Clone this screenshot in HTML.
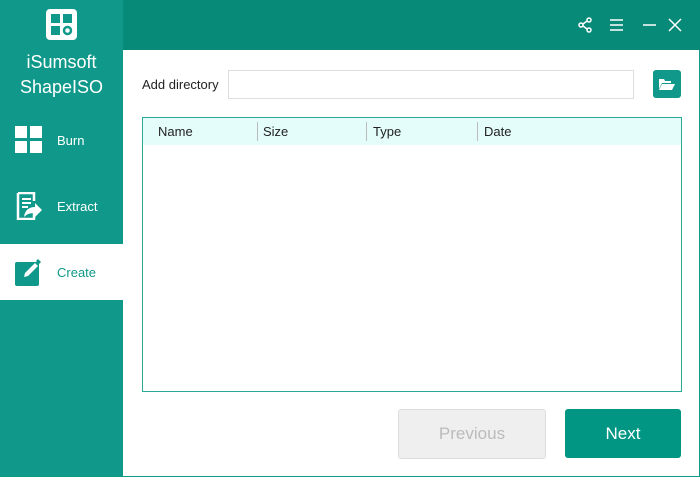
<!DOCTYPE html><html><head><style>
body{margin:0;width:700px;height:477px;position:relative;font-family:"Segoe UI","Liberation Sans",sans-serif;background:#fff;overflow:hidden}
.a{position:absolute}
#side{left:0;top:0;width:123px;height:477px;background:#10998a}
#top{left:123px;top:0;width:577px;height:50px;background:#078a77}
.nav{left:0;width:123px;height:56px;color:#fff;font-size:13px}
.nav span{position:absolute;left:57px;top:21px}
</style></head><body>
<div id="side" class="a"></div>
<div id="top" class="a"></div>
<div class="a" style="right:0;top:50px;width:1px;height:427px;background:#10998a"></div>
<div class="a" style="left:123px;bottom:0;width:577px;height:1px;background:#10998a"></div>
<svg class="a" style="left:46px;top:9px" width="31" height="31"><rect width="31" height="31" rx="4" fill="#fff"/><rect x="5" y="5" width="9" height="9" fill="#10998a"/><rect x="17" y="5" width="9" height="9" fill="#10998a"/><rect x="5" y="17" width="9" height="9" fill="#10998a"/><circle cx="21.5" cy="21.5" r="3.5" fill="none" stroke="#10998a" stroke-width="2.5"/></svg>
<div class="a" style="left:0;top:50px;width:123px;text-align:center;color:#fff;font-size:18px;line-height:25px">iSumsoft<br>ShapeISO</div>
<div class="a nav" style="top:112px"><svg class="a" style="left:15px;top:14px" width="27" height="28"><rect width="12" height="12" fill="#fff"/><rect x="15" width="12" height="12" fill="#fff"/><rect y="15" width="12" height="12" fill="#fff"/><rect x="15" y="15" width="12" height="12" fill="#fff"/></svg><span>Burn</span></div>
<div class="a nav" style="top:178px"><svg class="a" style="left:16px;top:14px" width="26" height="28"><path d="M2 1h16v8M2 1v26h16v-6" fill="none" stroke="#fff" stroke-width="2.5"/><path d="M6 7h9M6 11h9M6 15h6" stroke="#fff" stroke-width="2"/><path d="M8 25c1-7 5-10 11-10v-4l7 7-7 7v-4c-5 0-8 1-11 4z" fill="#fff"/></svg><span>Extract</span></div>
<div class="a nav" style="top:244px;background:#fff;color:#10998a"><svg class="a" style="left:15px;top:14px" width="28" height="30"><rect x="0" y="4" width="24" height="24" rx="2" fill="#10998a"/><path d="M9 19l1-4 10-10 3 3-10 10z" fill="#fff"/><path d="M21 3l2-2 3 3-2 2z" fill="#10998a"/></svg><span>Create</span></div>
<svg class="a" style="left:578px;top:17px" width="110" height="17" fill="none" stroke="#fff" stroke-width="1.5"><circle cx="11" cy="3" r="2"/><circle cx="3" cy="8" r="2"/><circle cx="11" cy="13" r="2"/><path d="M5 7l4-3M5 9l4 3"/><path d="M32 3h13M32 8h13M32 13h13M65 8h13M91 2l12 12M103 2l-12 12"/></svg>
<div class="a" style="left:142px;top:77px;font-size:13px;color:#222">Add directory</div>
<div class="a" style="left:228px;top:70px;width:404px;height:27px;border:1px solid #ddd"></div>
<div class="a" style="left:653px;top:70px;width:28px;height:28px;border-radius:3px;background:#10998a"><svg class="a" style="left:6px;top:8px" width="16" height="12"><path d="M0 1h5l1 2h6v2H3L0 11z" fill="#fff"/><path d="M3 6h13l-3 6H0z" fill="#fff"/></svg></div>
<div class="a" style="left:142px;top:117px;width:538px;height:273px;border:1px solid #2aa898"></div>
<div class="a" style="left:143px;top:118px;width:538px;height:27px;background:#e4fdfa;font-size:13px;color:#222">
<span class="a" style="left:15px;top:6px">Name</span><span class="a" style="left:114px;top:4px;width:1px;height:19px;background:#bbb"></span>
<span class="a" style="left:120px;top:6px">Size</span><span class="a" style="left:223px;top:4px;width:1px;height:19px;background:#bbb"></span>
<span class="a" style="left:230px;top:6px">Type</span><span class="a" style="left:334px;top:4px;width:1px;height:19px;background:#bbb"></span>
<span class="a" style="left:341px;top:6px">Date</span></div>
<div class="a" style="left:398px;top:409px;width:146px;height:48px;border:1px solid #ddd;border-radius:3px;background:#efefef;color:#bbb;font-size:17px;text-align:center;line-height:48px">Previous</div>
<div class="a" style="left:565px;top:409px;width:116px;height:49px;border-radius:3px;background:#019683;color:#fff;font-size:17px;text-align:center;line-height:49px">Next</div>
</body></html>
